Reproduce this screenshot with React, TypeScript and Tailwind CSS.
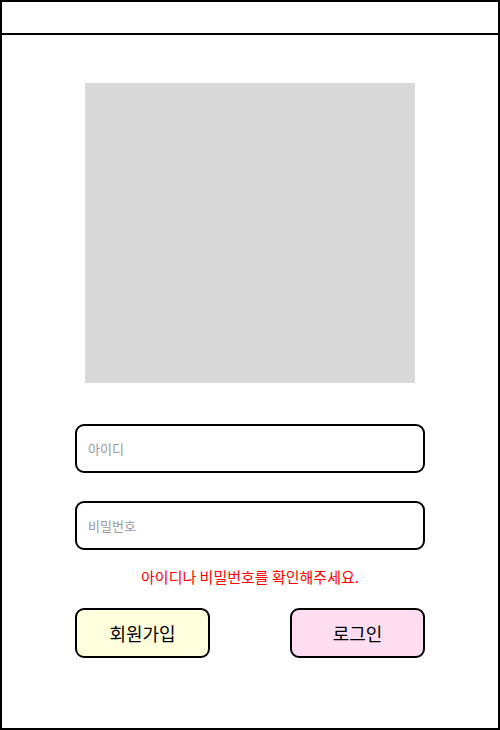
export default function App() {
  const font = { fontFamily: '"Noto Sans CJK KR", "Noto Sans", sans-serif' };
  return (
    <div
      className="w-[500px] h-[730px] border-2 border-black bg-white flex flex-col"
      style={font}
    >
      <header className="h-[33px] shrink-0 border-b-2 border-black" />
      <main className="flex flex-col items-center pt-[48px]">
        <div className="w-[330px] h-[300px] bg-[#d9d9d9]" />
        <div className="w-[350px] mt-[41px] flex flex-col gap-[28px]">
          <input
            type="text"
            placeholder="아이디"
            className="h-[49px] w-full border-2 border-black rounded-[9px] pl-[11px] text-[13px] outline-none placeholder:text-[#9a9a9a]"
          />
          <input
            type="password"
            placeholder="비밀번호"
            className="h-[49px] w-full border-2 border-black rounded-[9px] pl-[11px] text-[13px] outline-none placeholder:text-[#9a9a9a]"
          />
        </div>
        <p className="w-[350px] mt-[16px] text-center text-[15px] leading-[22px] text-[#ff0000]">
          아이디나 비밀번호를 확인해주세요.
        </p>
        <div className="w-[350px] mt-[20px] flex justify-between">
          <button className="w-[135px] h-[50px] border-2 border-black rounded-[9px] bg-[#ffffdd] text-[18px] text-black">
            회원가입
          </button>
          <button className="w-[135px] h-[50px] border-2 border-black rounded-[9px] bg-[#ffddf1] text-[18px] text-black">
            로그인
          </button>
        </div>
      </main>
    </div>
  );
}
